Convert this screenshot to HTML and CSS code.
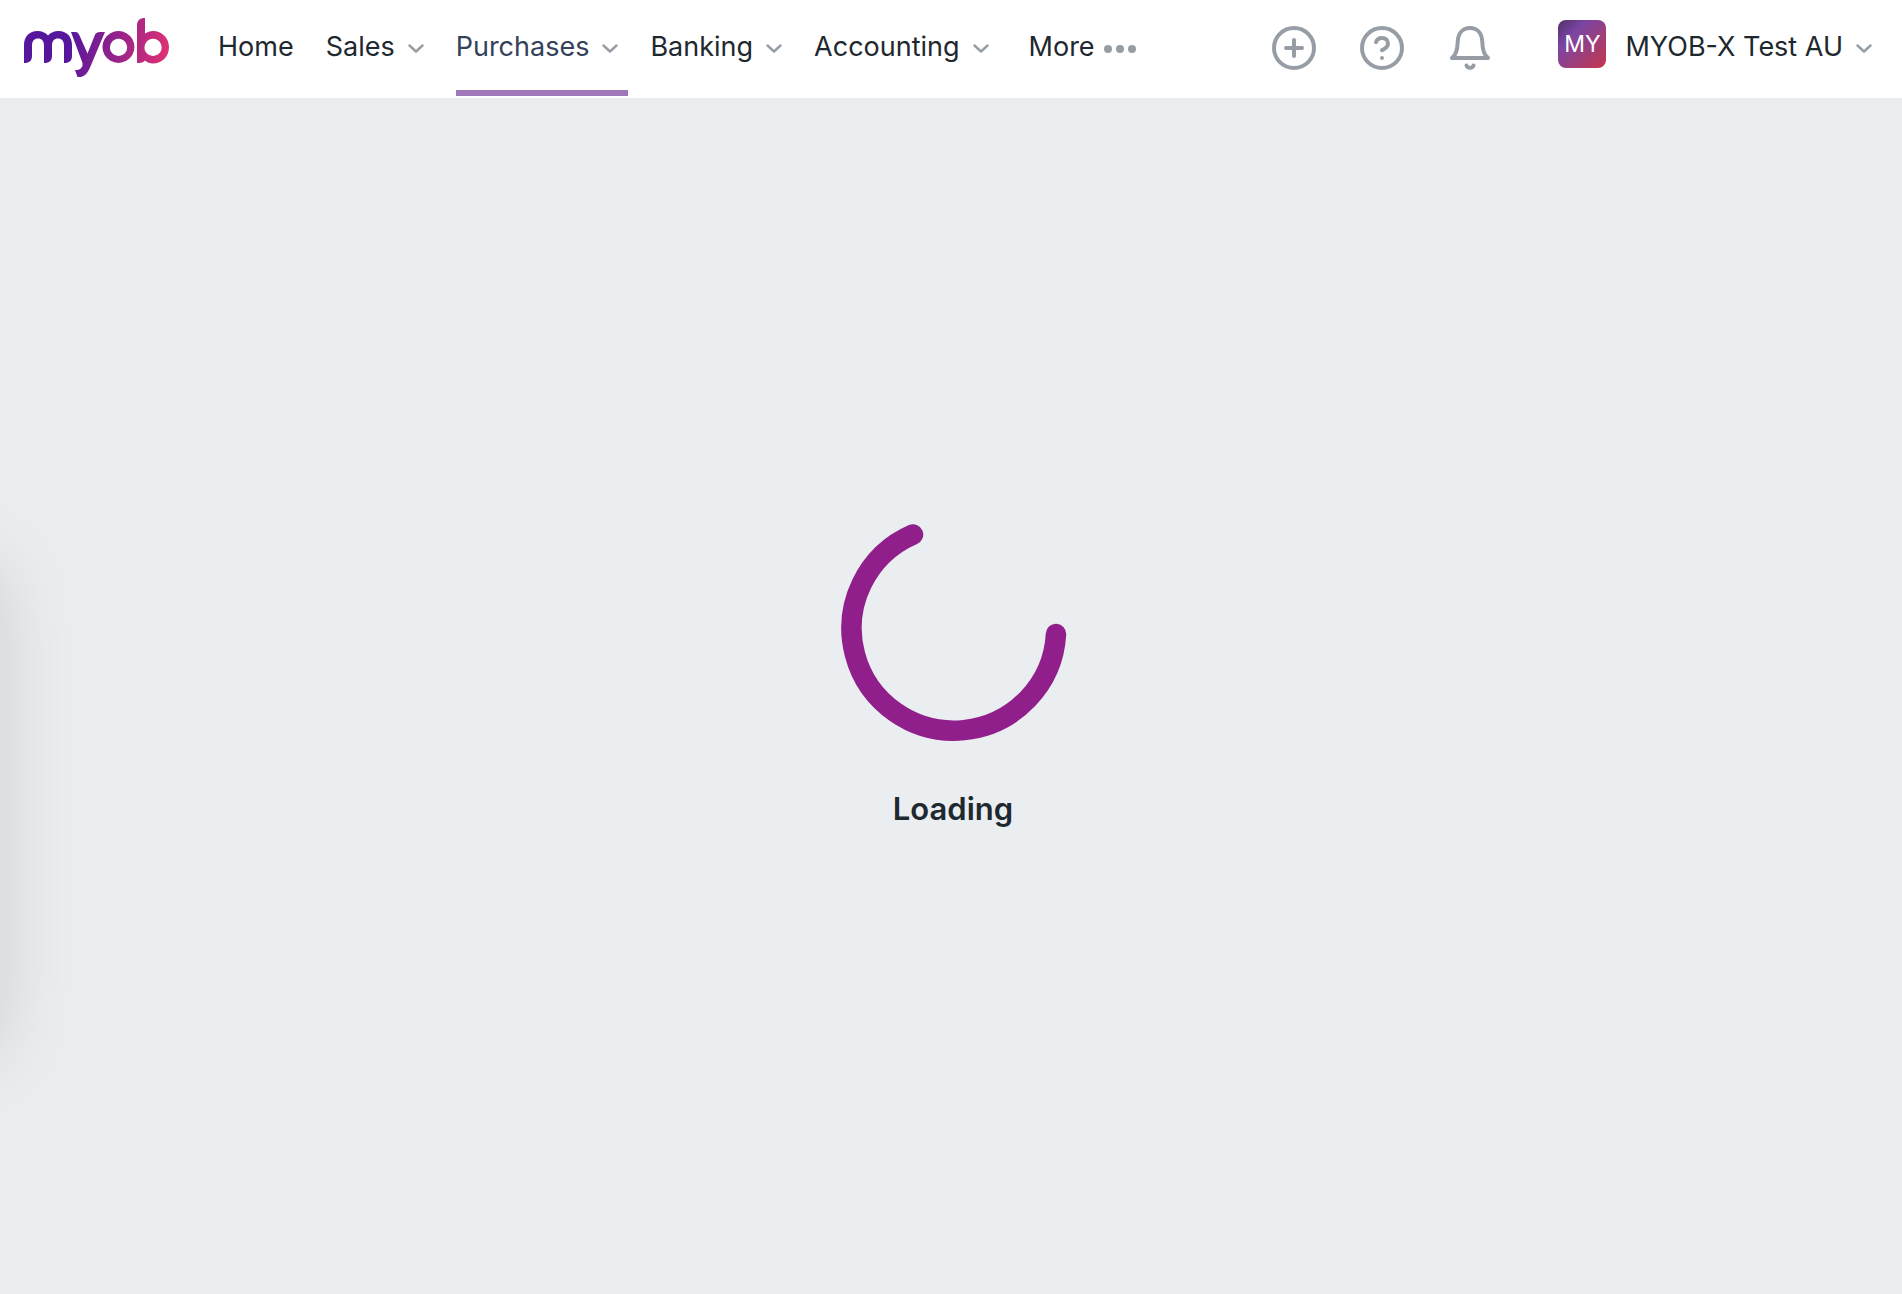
FILE: index.html
```html
<!DOCTYPE html>
<html lang="en">
<head>
<meta charset="utf-8">
<title>MYOB</title>
<link rel="stylesheet" href="styles.css">
</head>
<body>
<svg class="defs" width="0" height="0" aria-hidden="true">
  <symbol id="chevron" viewBox="0 0 16 10"><path d="M1.500 1.500 L8 7.500 L14.500 1.500" fill="none" stroke="currentColor" stroke-width="2.400" stroke-linecap="round" stroke-linejoin="round"/></symbol>
</svg>
<header class="header">
  <a class="logo" href="#" aria-label="MYOB">
    <svg width="146" height="60" viewBox="0 0 146 60" aria-hidden="true">
      <defs>
        <linearGradient id="brand" gradientUnits="userSpaceOnUse" x1="46" y1="22" x2="143" y2="42">
          <stop offset="0" stop-color="#56179c"/><stop offset=".5" stop-color="#98238a"/><stop offset="1" stop-color="#e03173"/>
        </linearGradient>
      </defs>
      <g fill="url(#brand)">
        <path d="M0 45V27C0 18.500 5.500 13 13.500 13C18 13 21.500 14.500 24 17.500C26.500 14.500 30 13 34.500 13C42.500 13 48 18.500 48 27V38C48 42.500 45.500 45 40 45V27.500C40 23 37.500 20.500 34 20.500C30.500 20.500 28 23 28 27.500V38C28 42.500 25.500 45 20 45V27.500C20 23 17.500 20.500 14 20.500C10.500 20.500 8 23 8 27.500V38C8 42.500 5.500 45 0 45Z"/>
        <path d="M47 14H51C53.500 14 54.500 15 55.500 17.500L63.500 35.500L70.500 18C71.500 15 73 14 76 14H81L66 49.500C63 56.500 59.500 59.500 53.500 59L51 52C55 52.500 57 51 58.500 48V45Z"/>
        <path d="M94.500 13A16 16 0 1 1 94.400 13ZM94.500 20.800A8.600 8.600 0 1 0 94.600 20.800Z" fill-rule="evenodd"/>
        <path d="M113 45V8C113 2.500 115.500 0 121 0V15.500C123.500 14 126 13 129 13C138 13 145 20 145 29.200C145 38.500 138 45.500 129 45.500C126 45.500 123 44.500 121 42.500C119.500 44.500 117 45 113 45ZM129 20.800A8.600 8.600 0 1 0 129.100 20.800Z" fill-rule="evenodd"/>
      </g>
    </svg>
  </a>
  <nav class="nav" aria-label="Main">
    <a class="item" href="#">Home</a>
    <button class="item">Sales<svg class="chevron"><use href="#chevron"/></svg></button>
    <button class="item active">Purchases<svg class="chevron"><use href="#chevron"/></svg></button>
    <button class="item">Banking<svg class="chevron"><use href="#chevron"/></svg></button>
    <button class="item">Accounting<svg class="chevron"><use href="#chevron"/></svg></button>
    <button class="item more">More<svg width="32" height="8" viewBox="0 0 32 8" fill="#969da5"><circle cx="4" cy="4" r="4"/><circle cx="16" cy="4" r="4"/><circle cx="28" cy="4" r="4"/></svg></button>
  </nav>
  <div class="tools">
    <button class="tool" aria-label="Create"><svg viewBox="0 0 44 44"><circle cx="22" cy="22" r="20"/><path d="M22 14V30M14 22H30"/></svg></button>
    <button class="tool" aria-label="Help"><svg viewBox="0 0 44 44"><circle cx="22" cy="22" r="20"/><path d="M16 16.200C16.800 13.400 19 11.900 22 11.900C25.600 11.900 28 14.300 28 17.600C28 21.600 24.800 23 22 24.200"/><circle class="dot" cx="22" cy="32" r="2"/></svg></button>
    <button class="tool" aria-label="Notifications"><svg viewBox="0 0 44 44"><path d="M4 32H40C36.500 29.500 34.500 24 34.300 16C34 7 29 2 22 2C15 2 10 7 9.700 16C9.500 24 7.500 29.500 4 32Z"/><path d="M18.500 39.500C19.500 42.600 24.500 42.600 25.500 39.500"/></svg></button>
  </div>
  <button class="account"><span class="avatar">MY</span><span>MYOB-X Test AU</span><svg class="chevron"><use href="#chevron"/></svg></button>
</header>
<main class="main">
  <aside class="drawer" aria-hidden="true"></aside>
  <div class="loader" role="status">
    <svg width="240" height="240" viewBox="0 0 240 240" aria-hidden="true"><path d="M80 26.500A102.300 102.300 0 1 0 223 126" fill="none" stroke="#911f8b" stroke-width="20.500" stroke-linecap="round"/></svg>
    <p class="label">Loading</p>
  </div>
</main>
</body>
</html>
```
FILE: styles.css
```css
* { box-sizing: border-box; }
body {
  margin: 0;
  min-height: 100vh;
  display: flex;
  flex-direction: column;
  background: #eaeef1;
  color: #1e282f;
  font-family: Inter, "Liberation Sans", sans-serif;
  font-size: 27px;
  line-height: 32px;
}
button {
  border: 0;
  padding: 0;
  background: none;
  color: inherit;
  font: inherit;
  cursor: pointer;
}
.defs { position: absolute; }
.header {
  display: flex;
  align-items: center;
  height: 98px;
  padding: 0 30px 2px 24px;
  background: #fff;
}
.logo { display: flex; margin-right: 48px; }
.nav {
  display: flex;
  align-self: stretch;
  gap: 22px;
}
.item {
  display: flex;
  align-items: center;
  padding: 4px 10px 0 0;
  border-bottom: 6px solid transparent;
  color: inherit;
  text-decoration: none;
  white-space: nowrap;
}
.item.active { border-color: #9f76b8; color: #33415a; }
.item .chevron { margin: 4px 0 0 13px; }
.item.more { margin-left: 8px; padding-right: 0; }
.item.more svg { margin: 4px 0 0 9px; }
.chevron { width: 16px; height: 10px; color: #969da5; }
.tools { display: flex; gap: 44px; margin-left: auto; }
.tool { width: 44px; height: 44px; }
.tool svg {
  display: block;
  fill: none;
  stroke: #969da5;
  stroke-width: 4;
  stroke-linecap: round;
  stroke-linejoin: round;
}
.tool .dot { fill: #969da5; stroke: none; }
.account {
  display: flex;
  align-items: center;
  margin: 0 0 2px 66px;
  white-space: nowrap;
}
.account .chevron { margin: 4px 0 0 13px; }
.avatar {
  width: 48px;
  height: 48px;
  margin: 0 19px 6px 0;
  border-radius: 8px;
  background: linear-gradient(135deg, #50306a, #7b45a3 30%, #c7364b);
  color: #fff;
  font-size: 23px;
  line-height: 48px;
}
.main {
  position: relative;
  flex: 1;
  display: flex;
  justify-content: center;
  align-items: center;
  overflow: hidden;
}
.drawer {
  position: absolute;
  top: 39%;
  bottom: 20%;
  right: 100%;
  width: 200px;
  box-shadow: 0 0 80px rgba(0, 0, 0, .13);
}
.loader {
  display: flex;
  flex-direction: column;
  align-items: center;
  gap: 45px;
  padding: 0 0 60px 4px;
}
.label { margin: 0; font-size: 31px; font-weight: 600; }
```
